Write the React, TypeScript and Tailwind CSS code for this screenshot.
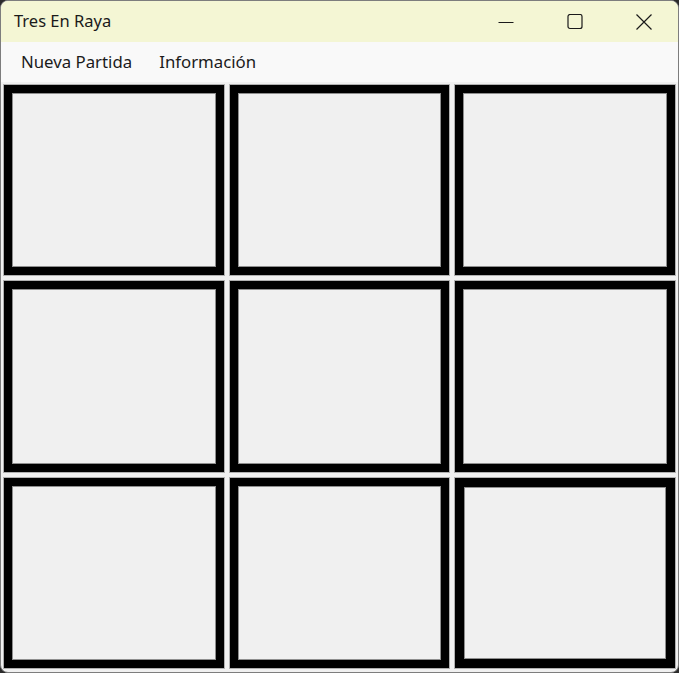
import React from "react";

const CELLS = [0, 1, 2, 3, 4, 5, 6, 7, 8];

export default function App() {
  return (
    <div className="w-[679px] h-[673px] bg-[#2b2b2b] font-['Noto_Sans',sans-serif]">
      <div className="h-full flex flex-col rounded-[8px] border border-[#7d7d7d] overflow-hidden bg-[#f0f0f0]">
        <header className="h-[41px] bg-[#f4f6d4] flex items-center">
          <span className="pl-[13px] pb-[1px] text-[16.5px] text-[#1a1a1a]">Tres En Raya</span>
          <div className="ml-auto flex h-full">
            <WindowButton>
              <svg width="16" height="16" viewBox="0 0 16 16">
                <line x1="0.5" y1="8.5" x2="15.5" y2="8.5" stroke="#1a1a1a" strokeWidth="1" />
              </svg>
            </WindowButton>
            <WindowButton>
              <svg width="16" height="16" viewBox="0 0 16 16">
                <rect x="1" y="0.5" width="14" height="14" rx="2" fill="none" stroke="#1a1a1a" strokeWidth="1.2" />
              </svg>
            </WindowButton>
            <WindowButton>
              <svg width="16" height="16" viewBox="0 0 16 16">
                <path d="M0.5 0.5 L15.5 15.5 M15.5 0.5 L0.5 15.5" stroke="#1a1a1a" strokeWidth="1.2" />
              </svg>
            </WindowButton>
          </div>
        </header>

        <nav className="h-[40px] bg-[#f9f9f9] flex items-center pl-[12px] gap-[11px] text-[16.8px] text-[#1b1b1b]">
          <span className="px-[8px]">Nueva Partida</span>
          <span className="px-[8px]">Información</span>
        </nav>

        <main className="flex-1 grid grid-cols-3 grid-rows-3 pb-[1px]">
          {CELLS.map((i) => (
            <button
              key={i}
              className={`m-[3px] bg-[#f0f0f0] border-black outline outline-1 outline-[#b0b0b0] shadow-[inset_0_0_0_1px_#8e8e8e] ${
                i === 8 ? "border-[9px]" : "border-[8px]"
              }`}
            />
          ))}
        </main>
      </div>
    </div>
  );
}

function WindowButton({ children }: { children: React.ReactNode }) {
  return <div className="w-[69px] h-full flex items-center justify-center">{children}</div>;
}
